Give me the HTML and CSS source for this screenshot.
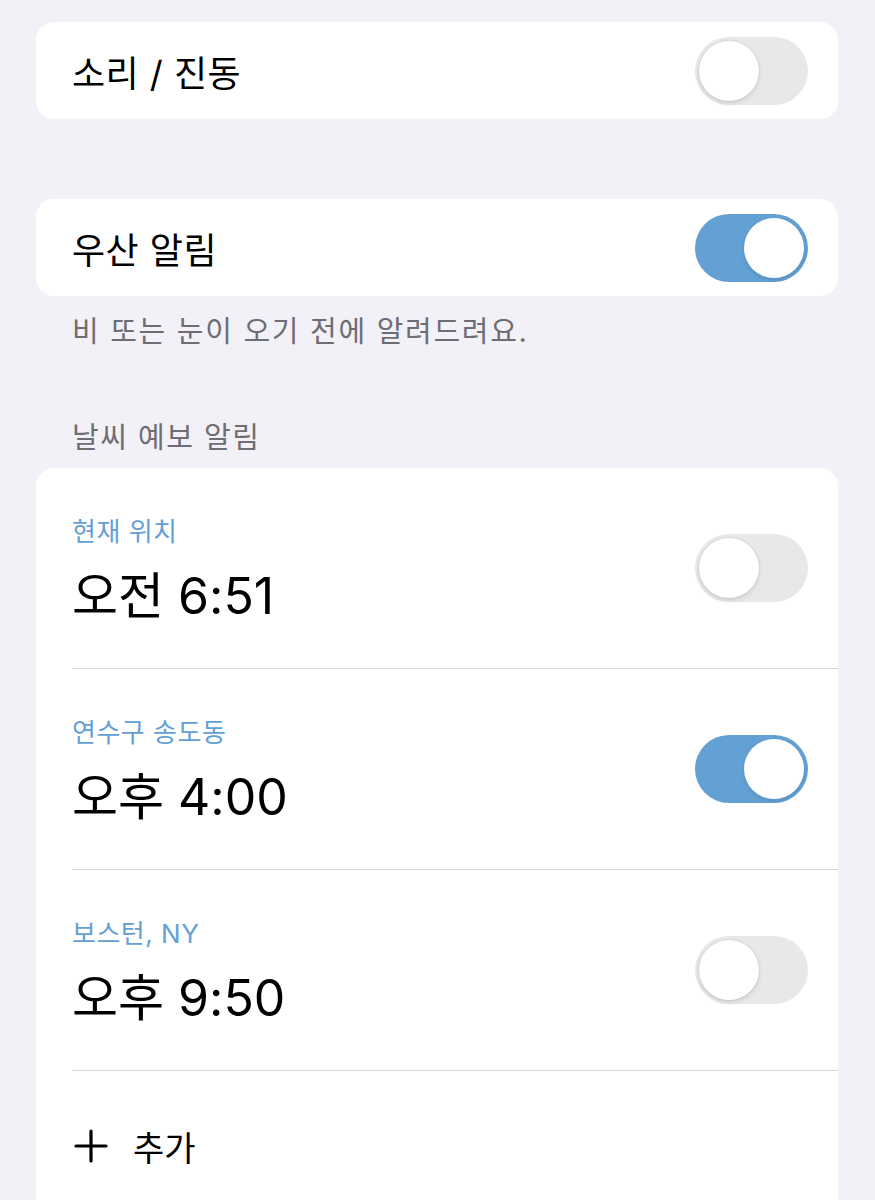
FILE: index.html
```html
<!DOCTYPE html>
<html lang="ko">
<head>
  <meta charset="UTF-8" />
  <meta name="viewport" content="width=device-width, initial-scale=1.0" />
  <title>알림 설정</title>
  <link rel="stylesheet" href="styles.css">
</head>
<body>
  <div class="group">
    <div class="row">
      <span class="row-title">소리 / 진동</span>
      <div class="switch"><div class="knob"></div></div>
    </div>
  </div>

  <div class="group group-rain">
    <div class="row">
      <span class="row-title">우산 알림</span>
      <div class="switch on"><div class="knob"></div></div>
    </div>
  </div>
  <div class="footer">비 또는 눈이 오기 전에 알려드려요.</div>

  <div class="section-header">날씨 예보 알림</div>
  <div class="group">
    <div class="alarm">
      <div class="alarm-info">
        <div class="alarm-place">현재 위치</div>
        <div class="alarm-time">오전 6:51</div>
      </div>
      <div class="switch"><div class="knob"></div></div>
    </div>
    <div class="alarm">
      <div class="alarm-info">
        <div class="alarm-place">연수구 송도동</div>
        <div class="alarm-time">오후 4:00</div>
      </div>
      <div class="switch on"><div class="knob"></div></div>
    </div>
    <div class="alarm">
      <div class="alarm-info">
        <div class="alarm-place">보스턴, NY</div>
        <div class="alarm-time">오후 9:50</div>
      </div>
      <div class="switch"><div class="knob"></div></div>
    </div>
    <div class="add-row">
      <svg class="plus" width="34" height="34" viewBox="0 0 34 34">
        <path d="M17 2 V32 M2 17 H32" stroke="#000" stroke-width="3.2" stroke-linecap="round" fill="none"/>
      </svg>
      <span class="add-label">추가</span>
    </div>
  </div>
</body>
</html>
```

FILE: styles.css
```css
body {
  margin: 0;
  padding: 22px 37px 0 36px;
  background: #f2f1f7;
  font-family: Inter, "Noto Sans CJK KR", sans-serif;
  color: #000;
  overflow: hidden;
}
.group {
  background: #fff;
  border-radius: 18px;
  overflow: hidden;
}
.group-rain {
  margin-top: 80px;
}
.row {
  height: 97px;
  display: flex;
  align-items: center;
  justify-content: space-between;
  padding: 0 30px 0 36px;
}
.row-title {
  font-size: 36px;
  letter-spacing: 0.5px;
}
.footer {
  padding: 12px 36px 0;
  font-size: 29px;
  letter-spacing: 1.7px;
  color: #6e6d73;
}
.section-header {
  margin-top: 64px;
  padding: 0 36px 12px;
  font-size: 29px;
  letter-spacing: 1.5px;
  color: #6e6d73;
}

.switch {
  width: 113px;
  height: 68px;
  border-radius: 34px;
  background: #e8e8ea;
  position: relative;
  flex-shrink: 0;
}
.switch .knob {
  position: absolute;
  top: 4px;
  left: 4px;
  width: 60px;
  height: 60px;
  border-radius: 50%;
  background: #fff;
  box-shadow: 0 2px 5px rgba(0, 0, 0, 0.12), 0 0 0 1px rgba(0, 0, 0, 0.04);
}
.switch.on {
  background: #63a0d4;
}
.switch.on .knob {
  left: 49px;
  box-shadow: 0 2px 4px rgba(0, 0, 0, 0.1);
}

.alarm {
  height: 200px;
  margin-left: 36px;
  padding-right: 30px;
  border-bottom: 1px solid #d4d4d6;
  display: flex;
  align-items: center;
  justify-content: space-between;
}
.alarm-place {
  font-size: 26px;
  letter-spacing: 0.5px;
  color: #63a0d6;
}
.alarm-time {
  font-size: 50px;
  margin-top: 18px;
  line-height: 1.2;
}
.add-row {
  height: 150px;
  margin-left: 38px;
  display: flex;
  align-items: center;
}
.add-row .plus {
  margin-right: 25px;
}
.add-label {
  font-size: 34px;
}
```
